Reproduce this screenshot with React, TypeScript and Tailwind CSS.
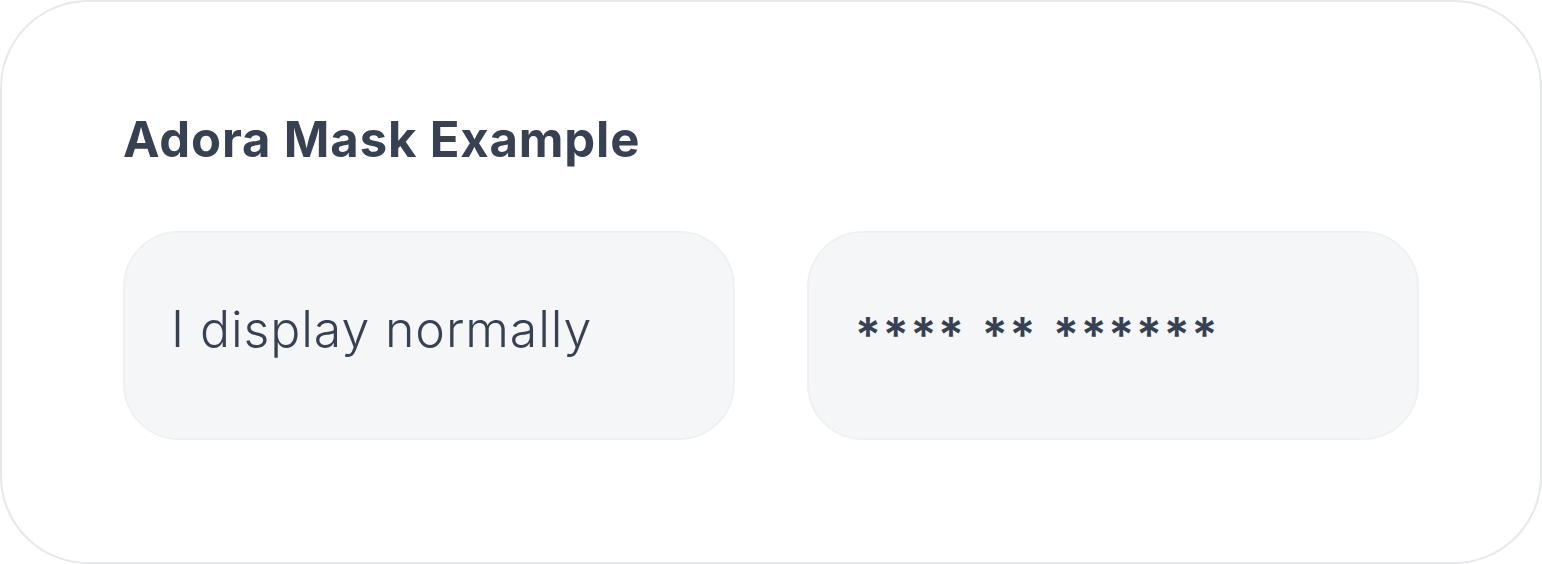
export default function App() {
  return (
    <div className="h-[564px] w-[1542px] bg-white" style={{ fontFamily: "Inter, 'Noto Sans', sans-serif" }}>
      <div className="box-border flex h-full flex-col rounded-[88px] border-2 border-[#e7e8ec] px-[121px] pt-[102px]">
        <h1 className="text-[49px] font-bold leading-[72px] tracking-[0.85px] text-[#374151]">
          Adora Mask Example
        </h1>
        <div className="mt-[55px] grid grid-cols-2 gap-[72px]">
          <div className="flex h-[209px] items-center rounded-[56px] border-2 border-[#eef0f3] bg-[#f5f6f8] px-[46px] pb-[14px]">
            <span className="text-[50px] font-light leading-none tracking-[0.9px] text-[#374151]">I display normally</span>
          </div>
          <div className="flex h-[209px] items-center rounded-[56px] border-2 border-[#eef0f3] bg-[#f5f6f8] px-[46px] pb-[2px]">
            <span className="whitespace-pre text-[48px] font-semibold leading-none tracking-[1.8px] [word-spacing:2px] text-[#374151]">**** ** ******</span>
          </div>
        </div>
      </div>
    </div>
  );
}
